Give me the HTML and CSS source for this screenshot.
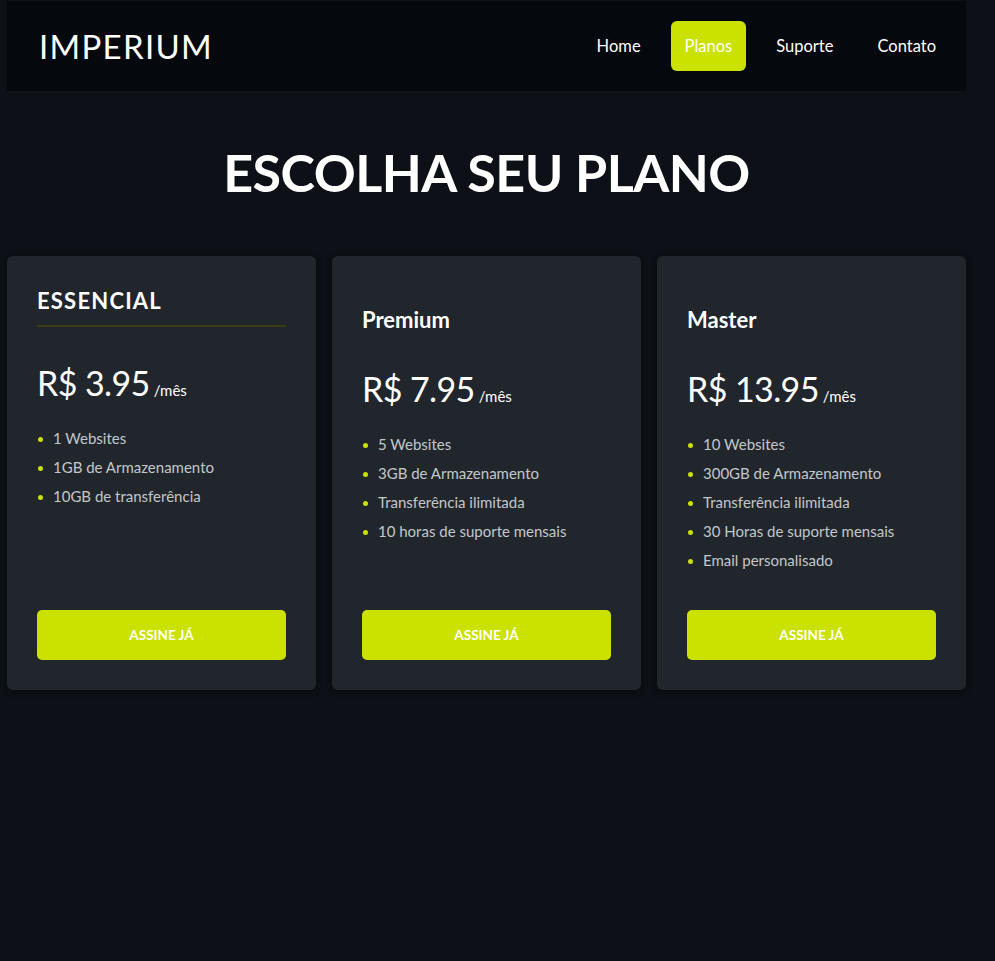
FILE: index.html
```html
<!DOCTYPE html>
<html lang="pt-BR">
<head>
<meta charset="utf-8">
<title>Imperium - Planos</title>
<link rel="stylesheet" href="styles.css">
</head>
<body>
<div class="page">
  <header class="topbar">
    <div class="logo">IMPERIUM</div>
    <nav class="nav">
      <a class="nav-link" href="#">Home</a>
      <a class="nav-link active" href="#">Planos</a>
      <a class="nav-link" href="#">Suporte</a>
      <a class="nav-link" href="#">Contato</a>
    </nav>
  </header>

  <h1 class="title">ESCOLHA SEU PLANO</h1>

  <section class="plans">
    <article class="card">
      <h2 class="plan-name plan-name-caps">ESSENCIAL</h2>
      <div class="price">R$ 3.95<span class="per">/mês</span></div>
      <ul class="features">
        <li>1 Websites</li>
        <li>1GB de Armazenamento</li>
        <li>10GB de transferência</li>
      </ul>
      <a class="cta" href="#">ASSINE JÁ</a>
    </article>
    <article class="card">
      <h2 class="plan-name">Premium</h2>
      <div class="price">R$ 7.95<span class="per">/mês</span></div>
      <ul class="features">
        <li>5 Websites</li>
        <li>3GB de Armazenamento</li>
        <li>Transferência ilimitada</li>
        <li>10 horas de suporte mensais</li>
      </ul>
      <a class="cta" href="#">ASSINE JÁ</a>
    </article>
    <article class="card">
      <h2 class="plan-name">Master</h2>
      <div class="price">R$ 13.95<span class="per">/mês</span></div>
      <ul class="features">
        <li>10 Websites</li>
        <li>300GB de Armazenamento</li>
        <li>Transferência ilimitada</li>
        <li>30 Horas de suporte mensais</li>
        <li>Email personalisado</li>
      </ul>
      <a class="cta" href="#">ASSINE JÁ</a>
    </article>
  </section>
</div>
</body>
</html>
```
FILE: styles.css
```css
html, body {
  margin: 0;
  padding: 0;
  background: #0d1117;
  color: #ffffff;
  font-family: Lato, "Open Sans", sans-serif;
  height: 100%;
}
.page {
  width: 959px;
  margin: 1px 0 0 7px;
}
.topbar {
  height: 90px;
  background: #05080c;
  display: flex;
  align-items: center;
  justify-content: space-between;
  padding: 0 16px 0 32px;
  box-sizing: border-box;
}
.logo {
  font-size: 33px;
  letter-spacing: 1.3px;
  font-weight: 400;
  color: #fff;
}
.nav {
  display: flex;
  gap: 16px;
}
.nav-link {
  display: flex;
  align-items: center;
  height: 50px;
  padding: 0 14px;
  border-radius: 6px;
  color: #fff;
  text-decoration: none;
  font-size: 16.5px;
}
.nav-link.active {
  background: #cbe200;
}
.title {
  margin: 0;
  padding: 49px 0 52px;
  text-align: center;
  font-size: 52px;
  line-height: 64px;
  letter-spacing: -0.5px;
  font-weight: 700;
}
.plans {
  display: grid;
  grid-template-columns: repeat(3, 1fr);
  gap: 16px;
}
.card {
  background: #21262d;
  border-radius: 6px;
  padding: 30px;
  display: flex;
  flex-direction: column;
  box-shadow: 0 2px 6px rgba(0,0,0,0.4);
}
.plan-name {
  margin: 21px 0 0;
  font-size: 22px;
  line-height: 26px;
  font-weight: 700;
}
.plan-name-caps {
  margin: 0;
  padding: 2px 0 11px;
  letter-spacing: 1.2px;
  border-bottom: 2px solid #373e12;
}
.price {
  margin-top: 36px;
  font-size: 34px;
  line-height: 40px;
  letter-spacing: -0.6px;
}
.per {
  font-size: 15px;
  margin-left: 4px;
  letter-spacing: 0;
}
.features {
  margin: 14px 0 35px;
  padding: 0 0 0 16px;
  list-style: none;
  font-size: 15px;
  line-height: 29px;
  color: #c3c6ca;
}
.features li {
  position: relative;
}
.features li::before {
  content: "";
  position: absolute;
  left: -15.5px;
  top: 12.5px;
  width: 5px;
  height: 5px;
  border-radius: 50%;
  background: #cbe200;
}
.cta {
  margin-top: auto;
  height: 50px;
  border-radius: 5px;
  background: #cbe200;
  color: #fff;
  font-weight: 700;
  font-size: 13.5px;
  text-decoration: none;
  display: flex;
  align-items: center;
  justify-content: center;
}
```
